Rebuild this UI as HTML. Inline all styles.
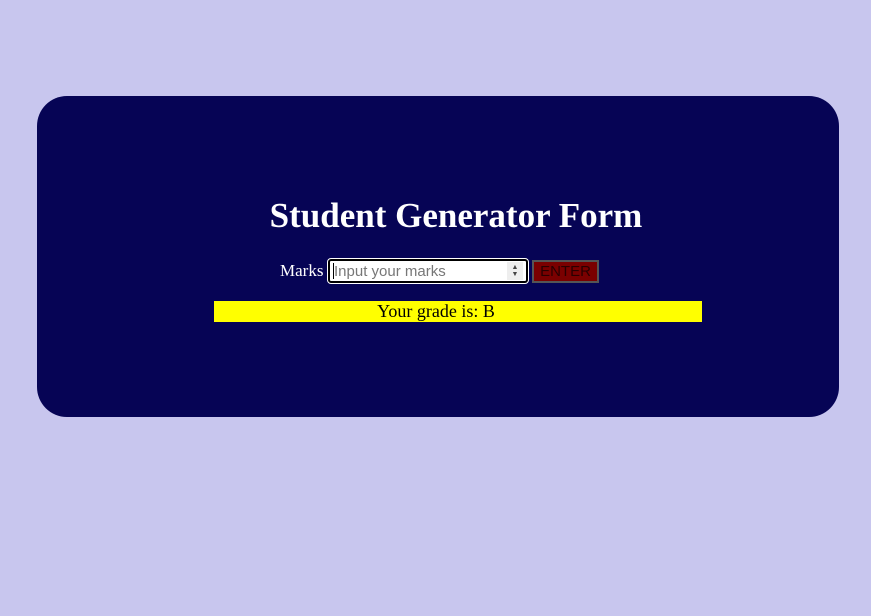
<!DOCTYPE html>
<html><head><style>
body{margin:0;width:871px;height:616px;background:#c8c6ee;position:relative;overflow:hidden;font-family:"Liberation Serif",serif}
.card{position:absolute;left:37px;top:96px;width:802px;height:321px;background:#060455;border-radius:30px}
h1{position:absolute;left:0;width:912px;top:196px;margin:0;text-align:center;color:#fff;font-size:35px;font-weight:bold;line-height:40px}
.lbl{position:absolute;left:280px;top:261px;color:#fff;font-size:17px}
.inp{position:absolute;left:328px;top:259px;width:200px;height:24px;background:#fff;border:2px solid #000;outline:1px solid #fff;border-radius:3px;box-sizing:border-box}
.inp span{position:absolute;left:4px;top:2px;font:15px "Liberation Sans",sans-serif;color:#777}
.inp i{position:absolute;left:3px;top:2px;width:1px;height:16px;background:#000}
.inp b{position:absolute;right:3px;top:1px;width:16px;height:18px;background:#eee;font-size:7px;line-height:7px;color:#444;text-align:center;padding-top:2px;box-sizing:border-box}
.btn{position:absolute;left:532px;top:260px;width:67px;height:23px;background:#7a0000;border:2px solid #555;box-sizing:border-box;font:15px "Liberation Sans",sans-serif;color:#2a0000;text-align:center;line-height:19px}
.res{position:absolute;left:214px;top:301px;width:488px;height:21px;background:#ff0;text-align:center;font-size:18px;line-height:21px;color:#000;padding-right:44px;box-sizing:border-box}
</style></head><body>
<div class="card"></div>
<h1>Student Generator Form</h1>
<div class="lbl">Marks</div>
<div class="inp"><i></i><span>Input your marks</span><b>▲<br>▼</b></div>
<div class="btn">ENTER</div>
<div class="res">Your grade is: B</div>
</body></html>
